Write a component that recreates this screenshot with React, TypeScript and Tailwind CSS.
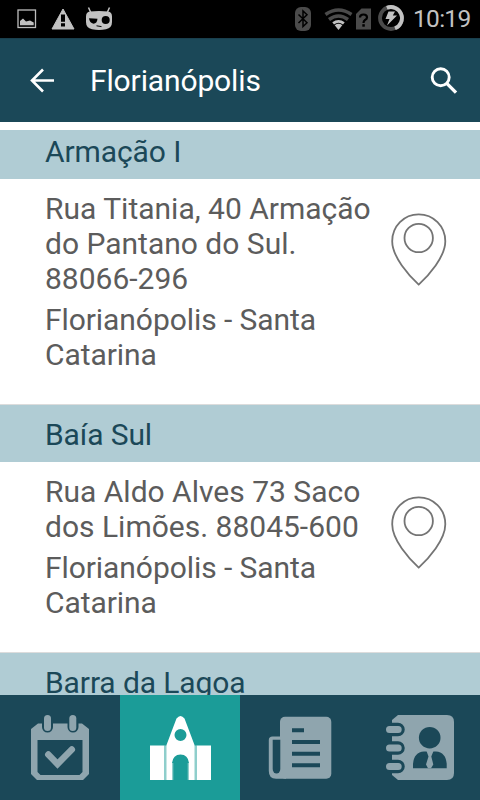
import React, { useState } from "react";

const places = [
  {
    name: "Armação I",
    address: "Rua Titania, 40 Armação do Pantano do Sul. 88066-296",
    city: "Florianópolis - Santa Catarina",
  },
  {
    name: "Baía Sul",
    address: "Rua Aldo Alves 73 Saco dos Limões. 88045-600",
    city: "Florianópolis - Santa Catarina",
  },
  {
    name: "Barra da Lagoa",
  },
];

const PinIcon = () => (
  <svg width="56" height="74" viewBox="0 0 56 74" fill="none" stroke="#747474" strokeWidth="1.8">
    <path d="M27.7 71.6C18 62.500 1.200 44 1.200 28.200C1.200 13 13 1.300 27.700 1.300S54.300 13 54.300 28.200C54.300 44 37.500 62.500 27.700 71.600Z" />
    <circle cx="27.7" cy="25" r="14.200" />
  </svg>
);

const CalendarIcon = () => (
  <svg width="58" height="66" viewBox="0 0 58 66">
    <path
      fill="#8fa5ae"
      fillRule="evenodd"
      d="M7 8.500H11V12A5.300 5.300 0 0 0 22 12V8.500H36.500V12A5.300 5.300 0 0 0 47.500 12V8.500H51L58 14V59L52 65H6L0 59V14ZM6.500 25V57L9.500 60H48.500L51.500 57V25Z"
    />
    <rect x="13" y="0" width="7" height="16" rx="3.500" fill="#8fa5ae" />
    <rect x="38.300" y="0" width="7" height="16" rx="3.500" fill="#8fa5ae" />
    <path d="M17.300 39.500L26.500 49L40.800 34.500" fill="none" stroke="#8fa5ae" strokeWidth="6.500" strokeLinecap="round" />
  </svg>
);

const ChurchIcon = () => (
  <svg width="61" height="66" viewBox="0 0 61 66">
    <rect x="0" y="30.500" width="14.500" height="34.500" fill="#fff" />
    <rect x="46.500" y="30.500" width="14.500" height="34.500" fill="#fff" />
    <path fill="#8fcecb" d="M14.500 30.500H17V65H14.500ZM44 30.500H46.500V65H44Z" />
    <path
      fill="#fff"
      fillRule="evenodd"
      d="M16.500 65V30L21 18L26.500 3.500Q30.500 -1.500 34.500 3.500L40 18L44.500 30V65H39V48Q38 39.500 30.500 39.500T22 48V65ZM30.500 14A6 6 0 1 0 30.500 26A6 6 0 1 0 30.500 14Z"
    />
    <path fill="#8fcecb" d="M22 48V65H23.300V48ZM37.700 48V65H39V48Z" />
  </svg>
);

const NewsIcon = () => (
  <svg width="64" height="64" viewBox="0 0 64 64">
    <rect x="12" y="0.700" width="51.300" height="62" rx="5" fill="#8fa5ae" />
    <path d="M13 20.500H4.500Q0.800 20.500 0.800 24V55Q0.800 62.700 8 62.700H18V20.500Z" fill="#8fa5ae" />
    <path d="M4.700 23.700H12.300V53A3.800 4.500 0 0 1 4.700 53Z" fill="#1b4858" />
    <path d="M24 14.300H36M24 26H52M24 37.800H52M24 49.300H52" stroke="#1b4858" strokeWidth="4" />
  </svg>
);

const ContactsIcon = () => (
  <svg width="68" height="66" viewBox="0 0 68 66">
    <path
      d="M12 0H61Q68 0 68 7V58Q68 65 61 65H12L6 60V5Z"
      fill="#8fa5ae"
    />
    <g fill="none" strokeLinecap="round">
      <path d="M5 14.500H12M5 33H12M5 51.500H12" stroke="#1b4858" strokeWidth="13.500" />
      <path d="M3.500 14.500H12.200M3.500 33H12.200M3.500 51.500H12.200" stroke="#8fa5ae" strokeWidth="7" />
    </g>
    <circle cx="43.700" cy="22.700" r="10.800" fill="#1b4858" />
    <path d="M27 53.300V49Q28 37 38 36.500H50Q59.700 37 60.700 49V53.300Z" fill="#1b4858" />
    <path d="M40.500 36H47.500L45.300 41.500L47.300 49.500L45 53.300H42L40 49.500L42.500 41.500Z" fill="#8fa5ae" />
  </svg>
);

const tabs = [
  { id: "events", icon: <CalendarIcon /> },
  { id: "churches", icon: <ChurchIcon /> },
  { id: "news", icon: <NewsIcon /> },
  { id: "contacts", icon: <ContactsIcon /> },
];

const StatusBar = () => (
  <div className="flex h-[38px] shrink-0 items-center bg-black pr-[9px] pl-[17px]">
    {/* Notifications */}
    <svg width="20" height="20" viewBox="0 0 20 20">
      <rect x="1" y="1" width="17.500" height="17.500" fill="none" stroke="#bdbdbd" strokeWidth="1.300" />
      <path d="M3 16.300V12L6 9.500L9 12.500L13 11.500L16.700 13.500V16.300Z" fill="#c2c2c2" />
    </svg>
    <svg className="ml-[14px]" width="24" height="22" viewBox="0 0 24 22">
      <path d="M12 1L23 21H1Z" fill="#c2c2c2" stroke="#c2c2c2" strokeLinejoin="round" />
      <path d="M10 6.500H14V13.700H10ZM10 15.300H14V18.500H10Z" fill="#000" />
    </svg>
    <svg className="ml-[11px]" width="26" height="24" viewBox="0 0 26 24">
      <path d="M2.500 0.500L5 6M23.500 0.500L21 6" stroke="#c2c2c2" strokeWidth="1.500" />
      <path d="M4 4.500Q13 3.300 22 4.500Q26 5 26 9.500V15Q26 21 20 22.300Q13 23.500 6 22.300Q0 21 0 15V9.500Q0 5 4 4.500Z" fill="#c2c2c2" />
      <path d="M3 11.300L11.500 11.800Q11 16.700 7.500 16.700Q3.500 16 3 11.300Z" fill="#000" />
      <circle cx="19.700" cy="13" r="4" fill="#000" />
      <path d="M10.500 18.800L15.500 19.600" stroke="#000" strokeWidth="1" />
    </svg>

    {/* System icons */}
    <svg className="ml-auto" width="16" height="24" viewBox="0 0 16 24">
      <rect width="16" height="24" rx="6" fill="#4b4b4b" />
      <path d="M3.500 7.500L12 15.700L8 19.500V4L12 7.800L3.500 16" fill="none" stroke="#000" strokeWidth="1.500" />
    </svg>
    <svg className="ml-[13px]" width="29" height="22" viewBox="0 0 29 22">
      <g fill="none" stroke="#4b4b4b" strokeWidth="3.500">
        <path d="M1.500 6.500Q14.500 -2.500 27.500 6.500" />
        <path d="M5 11.500Q14.500 4.500 24 11.500" />
      </g>
      <path d="M8.300 14.300Q14.500 9.500 20.700 14.300L19 16.500Q14.500 13 10 16.500Z" fill="#c2c2c2" />
      <path d="M10.700 17.200Q14.500 14.500 18.300 17.200L14.500 22Z" fill="#c2c2c2" />
    </svg>
    <svg className="ml-[3px]" width="15" height="22" viewBox="0 0 15 22">
      <path d="M0 6L5.500 0.500H15V21.500H0Z" fill="#4b4b4b" />
      <path d="M4 9.500Q4 6.500 7.500 6.500T11 9.500Q11 11 9 12Q7.500 13 7.500 15" fill="none" stroke="#000" strokeWidth="2.200" />
      <rect x="6.300" y="16.200" width="2.500" height="2.500" fill="#000" />
    </svg>
    <svg className="mt-[-2px] ml-[7px]" width="26" height="26" viewBox="0 0 26 26">
      <circle cx="13" cy="13" r="11" fill="none" stroke="#4b4b4b" strokeWidth="3.800" />
      <path d="M8.800 2.800A11 11 0 1 1 17 23.300" fill="none" stroke="#c2c2c2" strokeWidth="3.800" />
      <path d="M10.500 6.500H17L14.800 10.500H19L9 20.500L11.500 14H7.500Z" fill="#c2c2c2" />
    </svg>
    <span className="ml-[9px] w-[58px] text-[24.500px] leading-none tracking-[-0.7px] whitespace-nowrap text-[#c2c2c2]">
      10:19
    </span>
  </div>
);

export default function App() {
  const [activeTab, setActiveTab] = useState("churches");

  return (
    <div className="flex h-[800px] w-[480px] flex-col overflow-hidden bg-white font-['Roboto',sans-serif]">
      <StatusBar />

      {/* Header */}
      <header className="flex h-[84px] shrink-0 items-center border-t border-[#1a3f4d] bg-[#1b4858] pr-[22px] pl-[29px] text-white">
        <svg width="26" height="26" viewBox="0 0 26 26" fill="none" stroke="#fff" strokeWidth="2.600">
          <path d="M25 12.500H3M14 1.500L3 12.500L14 23.500" />
        </svg>
        <h1 className="ml-[35px] text-[30px] leading-[35px] tracking-[-0.13px]">Florianópolis</h1>
        <svg className="ml-auto" width="28" height="28" viewBox="0 0 28 28" fill="none" stroke="#fff">
          <circle cx="10.700" cy="10.300" r="8.500" strokeWidth="2.900" />
          <path d="M17 16.600L26 25.600" strokeWidth="3.400" />
        </svg>
      </header>

      {/* Places, scrolled slightly under the top gap */}
      <main className="flex min-h-0 flex-1 flex-col overflow-hidden pt-2">
        <div className="min-h-0 flex-1 overflow-hidden">
          <div className="-mt-2">
            {places.map((place) => (
              <section key={place.name} className="border-b border-[#dcdcdc] text-[30px] leading-[35px]">
                <h2 className="h-[57px] bg-[#b0ccd4] pt-3 pl-[45px] tracking-[-0.1px] text-[#1b4858]">
                  {place.name}
                </h2>
                {place.address && (
                  <div className="flex pt-3 pr-[33px] pb-8 pl-[45px] text-[#5c5c5c]">
                    <div className="w-[330px]">
                      <p>{place.address}</p>
                      <p className="mt-1.5 tracking-[-0.07px]">{place.city}</p>
                    </div>
                    <div className="ml-auto pt-[22px]">
                      <PinIcon />
                    </div>
                  </div>
                )}
              </section>
            ))}
          </div>
        </div>
      </main>

      {/* Bottom tabs */}
      <nav className="grid h-[105px] shrink-0 grid-cols-4">
        {tabs.map((tab) => (
          <button
            key={tab.id}
            onClick={() => setActiveTab(tab.id)}
            className={`flex items-center justify-center ${
              activeTab === tab.id ? "bg-[#1b9c98]" : "bg-[#1b4858]"
            }`}
          >
            {tab.icon}
          </button>
        ))}
      </nav>
    </div>
  );
}
